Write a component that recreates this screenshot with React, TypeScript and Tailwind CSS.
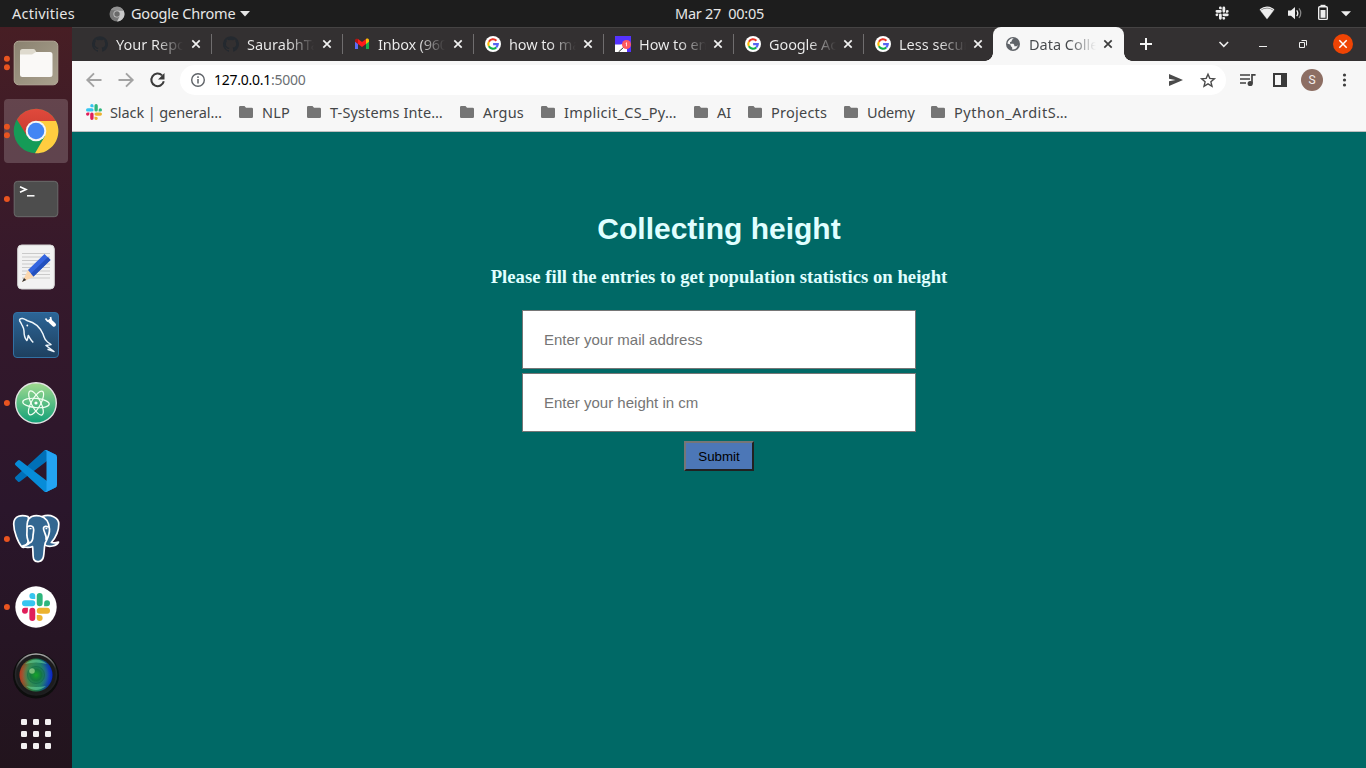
import type { ReactNode } from 'react';

const UI = "font-['Noto_Sans',sans-serif]";

const slackBar =
  'M5.042 15.165a2.528 2.528 0 0 1-2.52 2.523A2.528 2.528 0 0 1 0 15.165a2.527 2.527 0 0 1 2.522-2.52h2.52v2.52zM6.313 15.165a2.527 2.527 0 0 1 2.521-2.52 2.527 2.527 0 0 1 2.521 2.52v6.313A2.528 2.528 0 0 1 8.834 24a2.528 2.528 0 0 1-2.521-2.522v-6.313z';

function SlackMark({ colors = ['#e01e5a', '#36c5f0', '#2eb67d', '#ecb22e'] }: { colors?: string[] }) {
  return (
    <>
      {colors.map((c, i) => (
        <path key={i} d={slackBar} fill={c} transform={`rotate(${i * 90} 12 12)`} />
      ))}
    </>
  );
}

const githubPath =
  'M12 .3a12 12 0 0 0-3.8 23.4c.6.1.8-.3.8-.6v-2.1c-3.3.7-4-1.6-4-1.6-.6-1.4-1.4-1.8-1.4-1.8-1-.7.1-.7.1-.7 1.2.1 1.9 1.2 1.9 1.2 1 1.8 2.8 1.3 3.5 1 .1-.8.4-1.3.8-1.6-2.7-.3-5.5-1.3-5.5-6 0-1.2.5-2.3 1.3-3.1-.2-.4-.6-1.6 0-3.2 0 0 1-.3 3.4 1.2a11.5 11.5 0 0 1 6 0c2.3-1.5 3.3-1.2 3.3-1.2.6 1.6.2 2.8.1 3.2.8.8 1.3 1.9 1.3 3.2 0 4.6-2.8 5.6-5.5 5.9.5.4.9 1.1.9 2.2v3.3c0 .3.1.7.8.6A12 12 0 0 0 12 .3';

function GithubIcon() {
  return (
    <svg className="size-4 shrink-0" viewBox="0 0 24 24">
      <path fill="#24292f" d={githubPath} />
    </svg>
  );
}

function GoogleIcon() {
  return (
    <svg className="size-4 shrink-0" viewBox="0 0 16 16">
      <circle cx="8" cy="8" r="8" fill="#fff" />
      <g fill="none" strokeWidth="2.1">
        <path d="M3.9 5.7A4.7 4.7 0 0 1 11.4 4.7" stroke="#ea3323" />
        <path d="M3.9 10.3A4.7 4.7 0 0 1 3.9 5.7" stroke="#fbbc05" />
        <path d="M11.2 11.4A4.7 4.7 0 0 1 3.9 10.3" stroke="#10b34a" />
        <path d="M8.1 8.1h4.7A4.7 4.7 0 0 1 11.2 11.4" stroke="#5865f2" />
      </g>
    </svg>
  );
}

function GmailIcon() {
  return (
    <svg className="size-4 shrink-0" viewBox="0 0 16 16">
      <path d="M1 5v8h3V7.3z" fill="#5a6cf5" />
      <path d="M12 7.3V13h3V5z" fill="#12b04a" />
      <path d="M12 4v4l3-2.3V4.2C15 2.7 13.2 2.2 12 3z" fill="#fbbc04" />
      <path d="M1 5.7 4 8V4 3C2.500 2.200 1 2.900 1 4.200z" fill="#b31412" />
      <path d="M4 3.100 8 6.100 12 3.100V8l-4 3-4-3z" fill="#ff1a1a" />
    </svg>
  );
}

function GuideIcon() {
  return (
    <svg className="size-4 shrink-0" viewBox="0 0 16 16">
      <path fill="#5533ff" d="M0 0h16v16H0z" />
      <path fill="#fff" d="M0 8.500h5l7-1v8.500H0z" />
      <path d="M3.500 16 10 10" stroke="#333" strokeWidth="1" />
      <circle cx="11.500" cy="8.500" r="4.500" fill="#ff5a5f" />
      <path d="M11.500 6.700v3.600M10.700 7.300l.8-.6" stroke="#fff" strokeWidth=".8" fill="none" />
    </svg>
  );
}

function GlobeIcon() {
  return (
    <svg className="size-4 shrink-0" viewBox="0 0 16 16">
      <circle cx="8" cy="8" r="7" fill="#5f6368" />
      <path
        d="M8.600 2.400 6.800 4v1.300L5 6.200v1.600h3.300l1 1.200v1.300h2.400l1.100-1.400A5.600 5.600 0 0 1 7.200 13.500v-1.900L5.700 10V8.700L2.400 7.500A5.700 5.700 0 0 1 8.600 2.400z"
        fill="#f7f7f7"
      />
    </svg>
  );
}

function CloseGlyph({ dark }: { dark?: boolean }) {
  return (
    <svg className="h-4 w-4 shrink-0" viewBox="0 0 16 16">
      <path d="m4.300 4.300 7.400 7.400m0-7.400-7.400 7.400" stroke={dark ? '#3c3c3c' : '#f1f1f1'} strokeWidth="1.700" />
    </svg>
  );
}

type TabItem = { icon: ReactNode; text: string; box: string; tone: string; gap: string };

const tabs: TabItem[] = [
  { icon: <GithubIcon />, text: 'Your Repo', box: 'w-[131px]', tone: 'tracking-[0px]', gap: 'ml-[5px]' },
  { icon: <GithubIcon />, text: 'SaurabhTa', box: 'w-[131px]', tone: 'tracking-[0px]', gap: 'ml-[5px]' },
  { icon: <GmailIcon />, text: 'Inbox (960', box: 'w-[131px]', tone: 'tracking-[-0.2px]', gap: 'ml-[5px]' },
  { icon: <GoogleIcon />, text: 'how to ma', box: 'w-[130px]', tone: 'tracking-[-0.1px]', gap: 'ml-1' },
  { icon: <GuideIcon />, text: 'How to en', box: 'w-[130px]', tone: 'tracking-[-0.1px]', gap: 'ml-1' },
  { icon: <GoogleIcon />, text: 'Google Ac', box: 'w-[130px]', tone: 'tracking-[-0.1px]', gap: 'ml-1' },
  { icon: <GoogleIcon />, text: 'Less secur', box: 'w-[129px]', tone: 'tracking-[0px]', gap: 'ml-1' },
];

function TabBody({ icon, text, tone, gap, active }: { icon: ReactNode; text: string; tone: string; gap: string; active?: boolean }) {
  return (
    <>
      {icon}
      <span
        className={`ml-2 w-[67px] shrink-0 bg-clip-text text-[14.5px] leading-[22px] whitespace-nowrap text-transparent ${tone} ${
          active
            ? 'bg-[linear-gradient(90deg,#45484b_60%,#45484b00_100%)]'
            : 'bg-[linear-gradient(90deg,#eeeeee_60%,#eeeeee00_100%)]'
        }`}
      >
        {text}
      </span>
      <span className={`flex ${gap}`}>
        <CloseGlyph dark={active} />
      </span>
    </>
  );
}

const bookmarks = [
  { text: 'NLP', box: 'w-[68px]', tone: 'tracking-[0.2px]' },
  { text: 'T-Systems Inte…', box: 'w-[153px]', tone: 'tracking-[0.13px]' },
  { text: 'Argus', box: 'w-[81px]', tone: 'tracking-[0.2px]' },
  { text: 'Implicit_CS_Py…', box: 'w-[153px]', tone: 'tracking-[0.33px]' },
  { text: 'AI', box: 'w-[54px]', tone: 'tracking-[0px]' },
  { text: 'Projects', box: 'w-[96px]', tone: 'tracking-[0.25px]' },
  { text: 'Udemy', box: 'w-[87px]', tone: 'tracking-[-0.2px]' },
  { text: 'Python_ArditS…', box: 'w-[153px]', tone: 'tracking-[0.52px]' },
];

function TopBar() {
  return (
    <header className="flex h-[27px] shrink-0 items-center bg-[#1d1d1d] text-[14.5px] leading-[27px] text-[#e6e6e6]">
      <div className="flex w-[675px] items-center">
        <span className="ml-3 w-[97px] tracking-[0.25px]">Activities</span>
        <svg className="size-4" viewBox="0 0 16 16">
          <circle cx="8" cy="8" r="7.500" fill="#777" />
          <path d="M8 4.500h6.600A7.500 7.500 0 0 1 8 15.500l3-5.700z" fill="#c9c9c9" />
          <path d="M1.800 4A7.500 7.500 0 0 1 14.600 4.500H8z" fill="#929292" />
          <circle cx="8" cy="8" r="3.600" fill="#c4c4c4" />
          <circle cx="8" cy="8" r="2.700" fill="#6a6a6a" />
        </svg>
        <span className="ml-[6px] w-[109px] tracking-[-0.2px]">Google Chrome</span>
        <svg className="h-[6px] w-[10px]" viewBox="0 0 10 6">
          <path d="M0 0h10L5 5.500z" fill="#e6e6e6" />
        </svg>
      </div>
      <span className="w-[540px] whitespace-pre tracking-[-0.25px]">Mar 27  00:05</span>
      <svg className="h-[27px] w-[151px]" viewBox="1215 0 151 27">
        <g transform="translate(1215.500 6.500) scale(.55)">
          <SlackMark colors={['#eee', '#eee', '#eee', '#eee']} />
        </g>
        <path d="M1259.500 10Q1267 4.300 1274.500 10L1267 19.500z" fill="#777" />
        <path d="M1260 9.700Q1267 4.600 1274 9.700" fill="none" stroke="#eee" strokeWidth="1.200" />
        <path d="M1260.500 10.500Q1267 6.500 1273.500 10.500L1267 19z" fill="#eee" />
        <path d="M1288 10.500h3l4-3.500v12.300l-4-3.500h-3z" fill="#eee" />
        <path d="M1296.700 10.300q2.200 2.900 0 5.800" fill="none" stroke="#eee" strokeWidth="1.300" />
        <path d="M1299 8.400q3.600 4.800 0 9.600" fill="none" stroke="#888" strokeWidth="1.200" />
        <path d="M1320.500 5.500h5" stroke="#eee" strokeWidth="1.400" />
        <rect x="1318.700" y="6.700" width="8.600" height="12.700" rx="1" fill="none" stroke="#eee" strokeWidth="1.400" />
        <path d="M1320.500 10h5v7.800h-5z" fill="#eee" />
        <path d="M1341 11.200h10l-5 5z" fill="#eee" />
      </svg>
    </header>
  );
}

function DockItem({ dots = 0, active, children }: { dots?: number; active?: boolean; children: ReactNode }) {
  return (
    <div className={`h-16 w-16 shrink-0 rounded-[4px] ${active ? 'bg-[#ffffff2e]' : ''}`}>
      <svg className="size-16" viewBox="0 0 64 64">
        {dots === 1 && <circle cx="2.900" cy="32" r="3" fill="#e95420" />}
        {dots === 2 && (
          <>
            <circle cx="2.900" cy="27.700" r="3" fill="#e95420" />
            <circle cx="2.900" cy="36.300" r="3" fill="#e95420" />
          </>
        )}
        {children}
      </svg>
    </div>
  );
}

function Dock() {
  return (
    <aside className="flex w-[72px] shrink-0 flex-col items-center gap-1 bg-[linear-gradient(180deg,#471e24_0%,#36192b_32%,#2a162b_65%,#22141d_100%)] pt-1">
      <DockItem dots={2}>
        <defs>
          <linearGradient id="files" x2="1" y2="1">
            <stop stopColor="#8a8270" />
            <stop offset="1" stopColor="#aaa18e" />
          </linearGradient>
        </defs>
        <rect x="10.200" y="10.200" width="43.600" height="43.600" rx="4.500" fill="url(#files)" stroke="#b4ac99" />
        <path d="M16 20.500q0-2.500 2.500-2.500h11q1.500 0 2 1.500l1 2h4v8H16z" fill="#dedace" />
        <path d="M18 23.500h10l4-2.500h14q2.500 0 2.500 2.500v20q0 2.500-2.500 2.500H18.500Q16 46 16 43.500V23.500z" fill="#faf9f7" />
      </DockItem>
      <DockItem dots={2} active>
        <defs>
          <linearGradient id="cr" x2="0" y2="1"><stop stopColor="#e04a3c" /><stop offset="1" stopColor="#c93a30" /></linearGradient>
        </defs>
        <circle cx="32" cy="32" r="22.300" fill="#159b57" />
        <path d="M32 22h20A22.300 22.300 0 0 1 31 54.300L41 37z" fill="#ffcd40" />
        <path d="M12.900 20.500A22.300 22.300 0 0 1 52 22H32L23 37z" fill="url(#cr)" />
        <circle cx="32" cy="32" r="10.300" fill="#f5f5f5" />
        <circle cx="32" cy="32" r="8.300" fill="#4285f4" />
      </DockItem>
      <DockItem dots={1}>
        <rect x="10.200" y="14.300" width="43.600" height="35.400" rx="3.500" fill="#4d4d4d" stroke="#6c6c6c" />
        <path d="m16 19.800 6 2.700-6 2.700" fill="none" stroke="#fff" strokeWidth="1.600" />
        <path d="M23 28.800h7.500" stroke="#fff" strokeWidth="1.500" />
      </DockItem>
      <DockItem>
        <rect x="13.700" y="10" width="36.600" height="44" rx="4" fill="#f2f2f2" stroke="#d4d4d4" />
        <path d="M18 18.500h28M18 22h28M18 25.500h28M18 29h28M18 32.500h28M18 36h28M18 39.500h28M18 43h28" stroke="#cacaca" />
        <path d="m18 47 6-12 6.500 6.500z" fill="#fbd7ae" />
        <path d="m18 47 2-4 2.200 2z" fill="#333" />
        <path d="M24 35 40.500 19l6 6-17 16.500z" fill="#3465e0" />
        <path d="m27 38.500 17-16.500 2.500 3-17 16.500z" fill="#2350bd" />
      </DockItem>
      <DockItem>
        <defs>
          <linearGradient id="dol" x2="0" y2="1"><stop stopColor="#2c6597" /><stop offset="1" stopColor="#1e405f" /></linearGradient>
        </defs>
        <rect x="9.500" y="9.500" width="45" height="45" rx="3.500" fill="url(#dol)" stroke="#3271a3" />
        <path
          d="M15.500 17.500q0-2.300 3-2c2 .3 3 1.500 5 2.300 7.500 1.700 12.500 6.700 15.500 13.200 1.300 3.300 1.500 6 4.500 8l3.500 2.500-5 1 8 6-6.500-2.200M15.500 17.500c1 1.500 1.500 2.500 2.500 4.500 1.200 2.200 2 3.500 2 6 0 4 .8 7.500 2.800 9.500 1-1.200.9-3 1.500-5 1.700 2.500 2.700 5 5 7"
          fill="none" stroke="#eef6fb" strokeWidth="1.500" strokeLinejoin="round"
        />
        <circle cx="23.300" cy="22.500" r=".9" fill="#fff" />
        <path d="m46 18 4 3.700" stroke="#fff" strokeWidth="4" strokeLinecap="round" />
        <path d="M41.500 15.500l2 2.500 3.500-1-.500-3" fill="none" stroke="#fff" strokeWidth="1.700" />
      </DockItem>
      <DockItem dots={1}>
        <defs>
          <linearGradient id="at" x2="0" y2="1"><stop stopColor="#a2db90" /><stop offset="1" stopColor="#10a077" /></linearGradient>
        </defs>
        <circle cx="32" cy="32" r="20.300" fill="url(#at)" stroke="#e3e3e3" strokeWidth="1.400" />
        <g fill="none" stroke="#f2fff2" strokeWidth="1.200">
          <ellipse cx="32" cy="32" rx="13.300" ry="4.600" transform="rotate(5 32 32)" />
          <ellipse cx="32" cy="32" rx="13.300" ry="4.600" transform="rotate(63 32 32)" />
          <ellipse cx="32" cy="32" rx="13.300" ry="4.600" transform="rotate(119 32 32)" />
        </g>
        <circle cx="32" cy="32" r="1.600" fill="#fff" />
      </DockItem>
      <DockItem>
        <g transform="translate(11 11) scale(.42)">
          <path d="M96.461 10.796 75.857.876A6.250 6.250 0 0 0 68.750 2.083L1.299 63.583A4.167 4.167 0 0 0 1.303 69.745L6.813 74.754A4.167 4.167 0 0 0 12.134 74.990L93.361 13.370C96.086 11.303 100 13.246 100 16.667V16.427A6.250 6.250 0 0 0 96.461 10.796Z" fill="#0070b8" />
          <path d="M96.461 89.204 75.857 99.124A6.250 6.250 0 0 1 68.750 97.917L1.299 36.417A4.167 4.167 0 0 1 1.303 30.255L6.813 25.246A4.167 4.167 0 0 1 12.134 25.010L93.361 86.630C96.086 88.697 100 86.754 100 83.333V83.573A6.250 6.250 0 0 1 96.461 89.204Z" fill="#078cd8" />
          <path d="M75.858 99.126A6.250 6.250 0 0 1 68.750 97.917C71.056 100.223 75 98.590 75 95.328V4.672C75 1.410 71.056-.223 68.750 2.083A6.250 6.250 0 0 1 75.858.874L96.459 10.781A6.250 6.250 0 0 1 100 16.413V83.587A6.250 6.250 0 0 1 96.459 89.220Z" fill="#23a4f3" />
        </g>
      </DockItem>
      <DockItem dots={1}>
        <g fill="#336791" stroke="#fff" strokeWidth="1.700" strokeLinejoin="round">
          <path d="M24 9.500c-6-2-14.300-1.300-14.300 7.500 0 7.500 4.300 18.500 7.800 22.500 2.500 2.800 4-1 6-3.500l5-9z" />
          <path d="M38 9.500c8.500-3 16.800 1 16.800 7.500 0 7-4 14.500-7.500 18.500 1.500.5 5 .3 7.200-.4-1.500 4-9.500 5.500-13.500 3z" />
          <path d="M23.500 15c.7-5 6.500-7.500 12.500-6 6 1.300 9 7 9.500 13 .3 6-2.500 10-4 13.500-1.500 3-1 9-2 14-1 5.700-7.500 6.700-9.700 3-1.300-3-.5-10-1.300-13-3 1.500-7.500 1.200-10-.5 3-.8 5.700-1.200 6.700-3-2.700-4.500-2.600-8-2.200-12 .2-4-.4-5.500.5-9z" />
          <path d="M23 20q4-2.500 6.200.2c1.300 3.300-.2 5.800-.2 8.800 0 3-1 6-3.500 7M45 20c-3-1-5-1-5.500 1-.3 4 4 7.500 2.500 12" fill="none" />
        </g>
        <path d="M25.500 21.700h2M41.500 21.500h1.800" stroke="#fff" strokeWidth="1.300" />
      </DockItem>
      <DockItem dots={1}>
        <circle cx="32" cy="32" r="20.700" fill="#fff" />
        <g transform="translate(18 18) scale(1.167)">
          <SlackMark />
        </g>
      </DockItem>
      <DockItem>
        <defs>
          <linearGradient id="lensA"><stop stopColor="#e52a19" /><stop offset=".3" stopColor="#3d7d3c" /><stop offset=".62" stopColor="#14705c" /><stop offset="1" stopColor="#0a11e8" /></linearGradient>
          <radialGradient id="lensB"><stop stopColor="#16a62a" /><stop offset=".35" stopColor="#147a40" stopOpacity=".85" /><stop offset=".8" stopColor="#41b88a" stopOpacity=".15" /><stop offset="1" stopColor="#062" stopOpacity=".2" /></radialGradient>
          <linearGradient id="rim" x2="0" y2="1"><stop stopColor="#aaa" /><stop offset=".35" stopColor="#2a2a2c" /><stop offset="1" stopColor="#1d1d1f" /></linearGradient>
        </defs>
        <circle cx="32" cy="32.500" r="23" fill="#0d0d0d" />
        <circle cx="32" cy="31.500" r="20.500" fill="#1c1c1d" stroke="url(#rim)" strokeWidth="1.500" />
        <circle cx="32" cy="32" r="16.500" fill="url(#lensA)" />
        <circle cx="32" cy="32" r="16.500" fill="url(#lensB)" />
        <path d="M21 21q11-9 22 0-11-3-22 0M22 43q10 8 20 0-10 2-20 0" fill="#6fe3a8" opacity=".5" />
        <circle cx="32" cy="32" r="8.500" fill="none" stroke="#0c5f45" opacity=".5" />
        <circle cx="28" cy="28" r="2.800" fill="#b8e8a0" opacity=".6" />
      </DockItem>
      <svg className="mt-[7px] h-[32px] w-[30px] shrink-0" viewBox="0 0 30 32">
        {[0, 12, 24].map((y) =>
          [0, 12, 24].map((x) => <rect key={`${x}-${y}`} x={x} y={y + 1} width="6" height="6" rx="1.300" fill="#f2f0f1" />),
        )}
      </svg>
    </aside>
  );
}

function TabStrip() {
  return (
    <div className="flex h-[34px] shrink-0 items-start border-t border-[#454343] bg-[#333031] pl-[9px]">
      {tabs.map((t, i) => (
        <div key={i} className={`-mt-px flex h-[34px] shrink-0 items-center pl-[11px] ${t.box}`}>
          <TabBody icon={t.icon} text={t.text} tone={t.tone} gap={t.gap} />
          {i < 6 && <span className="ml-[7px] h-5 w-px shrink-0 bg-[#6f6d6e]" />}
        </div>
      ))}
      <div className="relative -mt-px flex h-[34px] w-[131px] shrink-0 items-center rounded-t-[8px] bg-[#f7f7f7] pl-3">
        <span className="absolute bottom-0 -left-2 size-2 bg-[radial-gradient(circle_at_0_0,#333031_7.5px,#f7f7f7_8px)]" />
        <span className="absolute -right-2 bottom-0 size-2 bg-[radial-gradient(circle_at_100%_0,#333031_7.5px,#f7f7f7_8px)]" />
        <TabBody icon={<GlobeIcon />} text="Data Colle" tone="tracking-[0px]" gap="ml-1" active />
      </div>
      <svg className="-mt-px h-[34px] w-[242px] shrink-0" viewBox="1124 27 242 34">
        <path d="M1140 44h12M1146 38v12" stroke="#f5f5f5" strokeWidth="2" />
        <path d="m1219.500 42 4.300 4.300 4.300-4.300" fill="none" stroke="#eee" strokeWidth="1.600" />
        <path d="M1259 46.500h8" stroke="#eee" />
        <path d="M1299.500 42.500h5v5h-5zM1301.500 40.500h5v5" fill="none" stroke="#eee" />
        <circle cx="1343" cy="44" r="10" fill="#ef4404" />
        <path d="m1339.300 40.300 7.400 7.400m0-7.400-7.400 7.400" stroke="#fff" strokeWidth="1.500" />
      </svg>
    </div>
  );
}

function Toolbar() {
  return (
    <div className="flex h-[38px] shrink-0 items-center bg-[#f7f7f7]">
      <svg className="h-[38px] w-[108px] shrink-0" viewBox="72.500 61 108 38">
        <path d="M102 80H88m6.500-6.700L87.800 80l6.700 6.700M119 80h14m-6.500-6.700 6.700 6.700-6.700 6.700" fill="none" stroke="#a3a3a3" strokeWidth="1.900" />
        <path d="M162.600 75.400a6.300 6.300 0 1 0 1.700 5.900" fill="none" stroke="#3a3a3a" strokeWidth="2" />
        <path d="M165 73v6.500h-6.500z" fill="#3a3a3a" />
      </svg>
      <div className="flex h-[30px] w-[1046px] shrink-0 items-center rounded-full bg-white">
        <svg className="ml-[10px] size-4 shrink-0" viewBox="0 0 16 16">
          <circle cx="8" cy="8" r="6.300" fill="none" stroke="#5f6368" strokeWidth="1.400" />
          <path d="M8 7v4.500M8 4.300v1.600" stroke="#5f6368" strokeWidth="1.500" />
        </svg>
        <span className="ml-2 grow pb-px text-[14px] tracking-[-0.25px] text-black">
          127.0.0.1<span className="text-[#6b6f73]">:5000</span>
        </span>
        <svg className="h-[30px] w-[66px] shrink-0" viewBox="1160 65 66 30">
          <path d="M1169 74v4.700l6.500 1.300-6.500 1.300V86l14-6z" fill="#4b4b4b" />
          <path d="m1208 74.200 1.800 4.200 4.600.4-3.500 3 1.100 4.500-4-2.400-4 2.400 1.100-4.500-3.500-3 4.600-.4z" fill="none" stroke="#4b4b4b" strokeWidth="1.400" />
        </svg>
      </div>
      <svg className="h-[38px] w-[72px] shrink-0" viewBox="1226 61 72 38">
        <path d="M1240 75h10M1240 79h10M1240 83h6" stroke="#424242" strokeWidth="1.600" />
        <circle cx="1250.200" cy="83.500" r="2.600" fill="#424242" />
        <path d="M1252 83.500v-8.700h3.600" fill="none" stroke="#424242" strokeWidth="1.700" />
        <path d="M1273 73h14v14h-14zm2 2v10h6V75z" fill="#3a3a3a" fillRule="evenodd" />
      </svg>
      <span className="ml-[3px] flex size-[22px] shrink-0 items-center justify-center rounded-full bg-[#8d6e63] font-['Roboto',sans-serif] text-[12px] text-[#f5eeee]">
        S
      </span>
      <svg className="ml-[17px] h-[14px] w-[8px] shrink-0" viewBox="0 0 8 14">
        <g fill="#3f3f3f"><circle cx="4.500" cy="2" r="1.600" /><circle cx="4.500" cy="7" r="1.600" /><circle cx="4.500" cy="12" r="1.600" /></g>
      </svg>
    </div>
  );
}

function BookmarkBar() {
  return (
    <div className="flex h-[33px] shrink-0 items-center border-b border-[#bebebe] bg-[#f7f7f7] pb-[6px] pl-[14px] text-[14.5px] leading-[26px] whitespace-nowrap text-[#444648]">
      <div className="flex w-[153px] shrink-0 items-center">
        <svg className="mr-2 size-4 shrink-0" viewBox="0 0 24 24">
          <SlackMark />
        </svg>
        <span className="tracking-[-0.1px]">Slack | general…</span>
      </div>
      {bookmarks.map((b) => (
        <div key={b.text} className={`flex shrink-0 items-center ${b.box}`}>
          <svg className="mr-[9px] h-3 w-[14px] shrink-0" viewBox="0 0 14 12">
            <path d="M0 1.300Q0 0 1.300 0H5.500L7 1.700h5.700q1.300 0 1.300 1.300v7.700q0 1.300-1.300 1.300H1.300Q0 12 0 10.700z" fill="#757575" />
          </svg>
          <span className={b.tone}>{b.text}</span>
        </div>
      ))}
    </div>
  );
}

const field =
  "h-[59px] w-[394px] border border-[#767676] bg-white px-[21px] font-['Liberation_Sans',Arial,sans-serif] text-[15px] text-black outline-none placeholder:text-[#757575] placeholder:opacity-100";

export default function App() {
  return (
    <div className={`flex h-[768px] w-[1366px] flex-col overflow-hidden ${UI}`}>
      <TopBar />
      <div className="flex min-h-0 grow">
        <Dock />
        <div className="flex w-[1294px] flex-col">
          <TabStrip />
          <Toolbar />
          <BookmarkBar />
          <main className="flex grow flex-col items-center bg-[#006966] pt-[79px] text-[#e0ffff]">
            <h1 className="font-['Liberation_Sans',Arial,sans-serif] text-[30px] leading-[35px] font-bold">Collecting height</h1>
            <h3 className="mt-5 font-['Liberation_Serif',serif] text-[18.72px] leading-[22px] font-bold">
              Please fill the entries to get population statistics on height
            </h3>
            <form className="mt-[22px] flex flex-col items-center" onSubmit={(e) => e.preventDefault()}>
              <input className={field} type="email" placeholder="Enter your mail address" />
              <input className={`mt-1 ${field}`} type="text" placeholder="Enter your height in cm" />
              <button
                type="submit"
                className="mt-[9px] h-[30px] w-[70px] border-2 border-t-[#767676] border-r-[#212121] border-b-[#212121] border-l-[#767676] bg-[#4c77b7] font-['Liberation_Sans',Arial,sans-serif] text-[13.333px] leading-[15px] text-black"
              >
                Submit
              </button>
            </form>
          </main>
        </div>
      </div>
    </div>
  );
}
